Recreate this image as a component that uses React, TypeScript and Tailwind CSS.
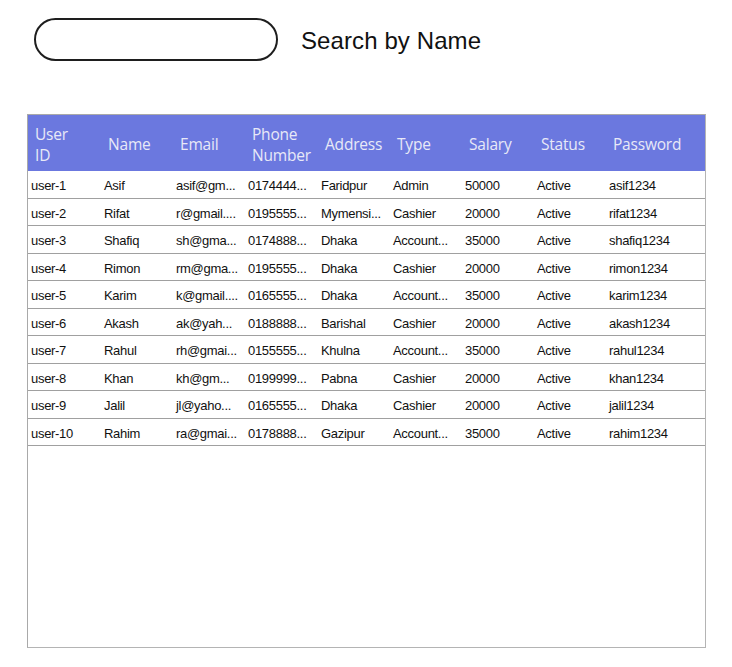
const columns = ['User ID', 'Name', 'Email', 'Phone Number', 'Address', 'Type', 'Salary', 'Status', 'Password'];

const rows: string[][] = [
  ['user-1', 'Asif', 'asif@gm...', '0174444...', 'Faridpur', 'Admin', '50000', 'Active', 'asif1234'],
  ['user-2', 'Rifat', 'r@gmail....', '0195555...', 'Mymensi...', 'Cashier', '20000', 'Active', 'rifat1234'],
  ['user-3', 'Shafiq', 'sh@gma...', '0174888...', 'Dhaka', 'Account...', '35000', 'Active', 'shafiq1234'],
  ['user-4', 'Rimon', 'rm@gma...', '0195555...', 'Dhaka', 'Cashier', '20000', 'Active', 'rimon1234'],
  ['user-5', 'Karim', 'k@gmail....', '0165555...', 'Dhaka', 'Account...', '35000', 'Active', 'karim1234'],
  ['user-6', 'Akash', 'ak@yah...', '0188888...', 'Barishal', 'Cashier', '20000', 'Active', 'akash1234'],
  ['user-7', 'Rahul', 'rh@gmai...', '0155555...', 'Khulna', 'Account...', '35000', 'Active', 'rahul1234'],
  ['user-8', 'Khan', 'kh@gm...', '0199999...', 'Pabna', 'Cashier', '20000', 'Active', 'khan1234'],
  ['user-9', 'Jalil', 'jl@yaho...', '0165555...', 'Dhaka', 'Cashier', '20000', 'Active', 'jalil1234'],
  ['user-10', 'Rahim', 'ra@gmai...', '0178888...', 'Gazipur', 'Account...', '35000', 'Active', 'rahim1234'],
];

export default function App() {
  return (
    <div className="w-[732px] h-[667px] bg-white overflow-hidden" style={{ fontFamily: '"Liberation Sans", Arial, sans-serif' }}>
      <div className="flex items-center pt-[18px] pl-[34px] gap-[23px]">
        <div className="w-[244px] h-[43px] rounded-full border-2 border-[#1e1e1e]" />
        <span className="text-[24px] text-[#111] leading-none pt-[3px] tracking-[0.1px]">Search by Name</span>
      </div>

      <div className="ml-[27px] mt-[53px] w-[679px] h-[534px] border border-[#a9a9a9] border-r-[#b4b4b4] border-b-[#b4b4b4] bg-white">
        <div
          className="grid grid-cols-[73px_72px_72px_73px_72px_72px_72px_72px_1fr] h-[56px] bg-[#6b78df] text-[#e8e9f7] text-[15.5px] leading-[21px]"
          style={{ fontFamily: '"Open Sans", "Noto Sans", sans-serif' }}
        >
          {columns.map((c) => (
            <div key={c} className="flex items-center pl-[7px] pr-1 pt-[3px] tracking-[-0.2px]">
              {c === 'User ID' ? (
                <span>User<br />ID</span>
              ) : c === 'Phone Number' ? (
                <span>Phone<br />Number</span>
              ) : (
                <span>{c}</span>
              )}
            </div>
          ))}
        </div>
        {rows.map((r) => (
          <div
            key={r[0]}
            className="grid grid-cols-[73px_72px_72px_73px_72px_72px_72px_72px_1fr] h-[27.5px] border-b border-[#a0a0a0] text-[13px] text-[#111] tracking-[-0.3px]"
          >
            {r.map((v, i) => (
              <div key={i} className="flex items-center pl-[3px] pt-[3px] whitespace-nowrap overflow-hidden">
                {v}
              </div>
            ))}
          </div>
        ))}
      </div>
    </div>
  );
}
